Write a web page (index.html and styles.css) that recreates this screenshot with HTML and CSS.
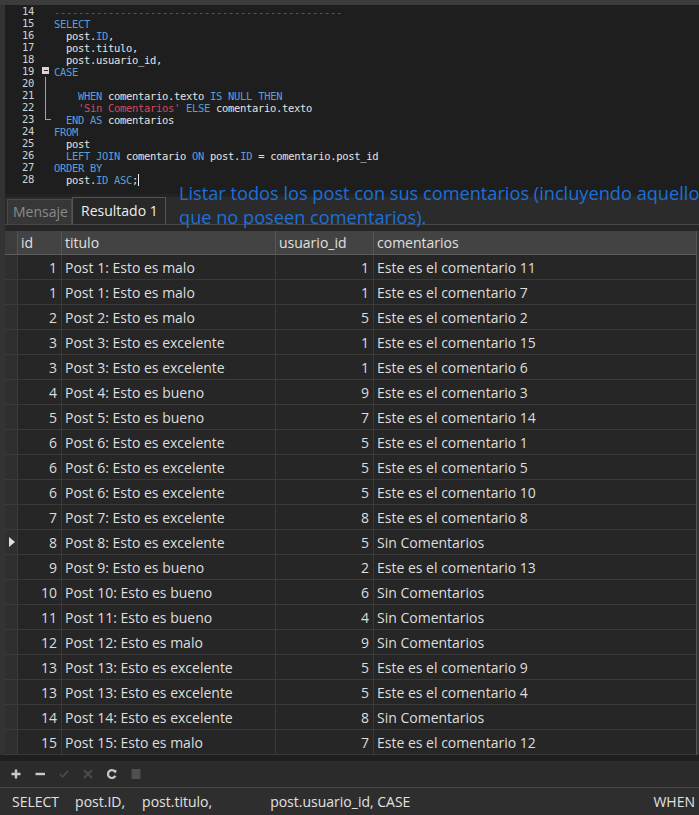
FILE: index.html
```html
<!DOCTYPE html>
<html lang="es">
<head>
<meta charset="utf-8">
<title>Consulta</title>
<link rel="stylesheet" href="styles.css">
</head>
<body>
<div class="app">
  <div class="topbar"></div>
  <div class="editor">
    <div class="gutter">
      <div>14</div><div>15</div><div>16</div><div>17</div><div>18</div><div>19</div><div>20</div><div>21</div><div>22</div><div>23</div><div>24</div><div>25</div><div>26</div><div>27</div><div>28</div>
    </div>
    <div class="folds">
      <div></div><div></div><div></div><div></div><div></div>
      <div class="f-box"><span></span></div>
      <div class="f-line"></div><div class="f-line"></div><div class="f-line"></div>
      <div class="f-end"></div>
    </div>
    <div class="code">
      <div class="ln cm">------------------------------------------------</div>
      <div class="ln"><span class="kw">SELECT</span></div>
      <div class="ln">  post.<span class="kw">ID</span>,</div>
      <div class="ln">  post.titulo,</div>
      <div class="ln">  post.usuario_id,</div>
      <div class="ln"><span class="kw">CASE</span></div>
      <div class="ln"> </div>
      <div class="ln">    <span class="kw">WHEN</span> comentario.texto <span class="kw">IS</span> <span class="kw">NULL</span> <span class="kw">THEN</span></div>
      <div class="ln">    <span class="str">'Sin Comentarios'</span> <span class="kw">ELSE</span> comentario.texto</div>
      <div class="ln">  <span class="kw">END</span> <span class="kw">AS</span> comentarios</div>
      <div class="ln"><span class="kw">FROM</span></div>
      <div class="ln">  post</div>
      <div class="ln">  <span class="kw">LEFT</span> <span class="kw">JOIN</span> comentario <span class="kw">ON</span> post.<span class="kw">ID</span> = comentario.post_id</div>
      <div class="ln"><span class="kw">ORDER</span> <span class="kw">BY</span></div>
      <div class="ln">  post.<span class="kw">ID</span> <span class="kw">ASC</span>;<span class="caret"></span></div>
    </div>
  </div>
  <div class="tabs">
    <div class="tab">Mensaje</div>
    <div class="tab active">Resultado 1</div>
  </div>
  <div class="tabs-under"></div>
  <div class="grid">
    <div class="row head"><div class="mark"></div><div>id</div><div>titulo</div><div>usuario_id</div><div>comentarios</div></div>
    <div class="row"><div class="mark"></div><div class="num">1</div><div>Post 1: Esto es malo</div><div class="num">1</div><div>Este es el comentario 11</div></div>
    <div class="row"><div class="mark"></div><div class="num">1</div><div>Post 1: Esto es malo</div><div class="num">1</div><div>Este es el comentario 7</div></div>
    <div class="row"><div class="mark"></div><div class="num">2</div><div>Post 2: Esto es malo</div><div class="num">5</div><div>Este es el comentario 2</div></div>
    <div class="row"><div class="mark"></div><div class="num">3</div><div>Post 3: Esto es excelente</div><div class="num">1</div><div>Este es el comentario 15</div></div>
    <div class="row"><div class="mark"></div><div class="num">3</div><div>Post 3: Esto es excelente</div><div class="num">1</div><div>Este es el comentario 6</div></div>
    <div class="row"><div class="mark"></div><div class="num">4</div><div>Post 4: Esto es bueno</div><div class="num">9</div><div>Este es el comentario 3</div></div>
    <div class="row"><div class="mark"></div><div class="num">5</div><div>Post 5: Esto es bueno</div><div class="num">7</div><div>Este es el comentario 14</div></div>
    <div class="row"><div class="mark"></div><div class="num">6</div><div>Post 6: Esto es excelente</div><div class="num">5</div><div>Este es el comentario 1</div></div>
    <div class="row"><div class="mark"></div><div class="num">6</div><div>Post 6: Esto es excelente</div><div class="num">5</div><div>Este es el comentario 5</div></div>
    <div class="row"><div class="mark"></div><div class="num">6</div><div>Post 6: Esto es excelente</div><div class="num">5</div><div>Este es el comentario 10</div></div>
    <div class="row"><div class="mark"></div><div class="num">7</div><div>Post 7: Esto es excelente</div><div class="num">8</div><div>Este es el comentario 8</div></div>
    <div class="row sel"><div class="mark"><span class="tri"></span></div><div class="num">8</div><div>Post 8: Esto es excelente</div><div class="num">5</div><div>Sin Comentarios</div></div>
    <div class="row"><div class="mark"></div><div class="num">9</div><div>Post 9: Esto es bueno</div><div class="num">2</div><div>Este es el comentario 13</div></div>
    <div class="row"><div class="mark"></div><div class="num">10</div><div>Post 10: Esto es bueno</div><div class="num">6</div><div>Sin Comentarios</div></div>
    <div class="row"><div class="mark"></div><div class="num">11</div><div>Post 11: Esto es bueno</div><div class="num">4</div><div>Sin Comentarios</div></div>
    <div class="row"><div class="mark"></div><div class="num">12</div><div>Post 12: Esto es malo</div><div class="num">9</div><div>Sin Comentarios</div></div>
    <div class="row"><div class="mark"></div><div class="num">13</div><div>Post 13: Esto es excelente</div><div class="num">5</div><div>Este es el comentario 9</div></div>
    <div class="row"><div class="mark"></div><div class="num">13</div><div>Post 13: Esto es excelente</div><div class="num">5</div><div>Este es el comentario 4</div></div>
    <div class="row"><div class="mark"></div><div class="num">14</div><div>Post 14: Esto es excelente</div><div class="num">8</div><div>Sin Comentarios</div></div>
    <div class="row"><div class="mark"></div><div class="num">15</div><div>Post 15: Esto es malo</div><div class="num">7</div><div>Este es el comentario 12</div></div>
  </div>
  <div class="sep"></div>
  <div class="toolbar">
    <svg class="ico" viewBox="0 0 10 10"><path d="M5 0.5v9M0.5 5h9" stroke="#c9c9c9" stroke-width="2.4" fill="none"/></svg>
    <svg class="ico" viewBox="0 0 10 10"><path d="M0.5 5h9.5" stroke="#c9c9c9" stroke-width="2.4" fill="none"/></svg>
    <svg class="ico" viewBox="0 0 12 10"><path d="M1 5.2l3.2 3.2L11 1.2" stroke="#4a4a4a" stroke-width="2" fill="none"/></svg>
    <svg class="ico" viewBox="0 0 10 10"><path d="M1 1l8 8M9 1l-8 8" stroke="#4a4a4a" stroke-width="2" fill="none"/></svg>
    <svg class="ico" viewBox="0 0 10 10"><path d="M8.3 3.2A3.9 3.9 0 1 0 8.4 6.8" stroke="#c9c9c9" stroke-width="2.2" fill="none"/><path d="M6.2 0.6L9.6 1.2 8.9 4.6z" fill="#c9c9c9"/></svg>
    <svg class="ico" viewBox="0 0 10 10"><rect x="0.5" y="0" width="9" height="10" fill="#4f4f4f"/></svg>
  </div>
  <div class="status">
    <span class="s1">SELECT</span>
    <span class="s2">post.ID,</span>
    <span class="s3">post.titulo,</span>
    <span class="s4">post.usuario_id, CASE</span>
    <span class="s5">WHEN</span>
  </div>
  <div class="note">Listar todos los post con sus comentarios (incluyendo aquellos<br>que no poseen comentarios).</div>
</div>
</body>
</html>
```

FILE: styles.css
```css
* { box-sizing: border-box; margin: 0; padding: 0; }
html, body { width: 699px; height: 815px; overflow: hidden; }
body { background: #2d2d2d; font-family: "Open Sans", "Liberation Sans", sans-serif; color: #dcdcdc; }

.app {
  position: relative;
  width: 699px;
  height: 815px;
  overflow: hidden;
  display: flex;
  flex-direction: column;
  background: #333333;
}

.topbar { height: 5px; flex: none; background: #3c3c3c; }

.editor {
  height: 189px;
  flex: none;
  margin-left: 5px;
  background: #1e1e1e;
  display: flex;
  font-family: "DejaVu Sans Mono", "Liberation Mono", monospace;
  font-size: 10.5px;
  letter-spacing: -0.32px;
  line-height: 12px;
}
.gutter { width: 29px; text-align: right; color: #d2d2d2; }
.folds { width: 20px; }
.folds > div { height: 12px; }
.f-box { display: flex; }
.f-box span {
  width: 7px; height: 7px;
  margin: 2px 0 0 8px;
  background: linear-gradient(#2a2a2a, #2a2a2a) center / 4px 1px no-repeat, #d6d6d6;
}
.folds .f-line { margin-left: 11px; border-left: 1px solid #a0a0a0; }
.folds .f-end { margin-left: 11px; width: 6px; height: 7px; border-left: 1px solid #a0a0a0; border-bottom: 1px solid #a0a0a0; }
.code { color: #e4e4e4; padding-top: 1px; }
.ln { height: 12px; white-space: pre; }
.cm { color: #5e5e5e; }
.kw { color: #5a9fd4; }
.str { color: #d6485f; }
.caret { display: inline-block; width: 1px; height: 12px; vertical-align: top; background: #f0f0f0; }

.tabs {
  height: 30px;
  flex: none;
  margin-left: 5px;
  padding-left: 2px;
  display: flex;
  align-items: flex-end;
  background: #2b2b2b;
  border-top: 3px solid #232323;
}
.tab {
  height: 25px;
  border: 1px solid #4a4a4a;
  border-bottom: none;
  font-size: 14px;
  line-height: 23px;
  white-space: nowrap;
}
.tab:first-child { width: 65px; padding-left: 5px; background: #373737; color: #8a8a8a; }
.tab.active { width: 94px; height: 27px; padding-left: 8px; background: #282828; color: #ededed; border-color: #545454; line-height: 26px; }
.tabs-under { height: 7px; flex: none; margin-left: 5px; background: #262626; border-top: 1px solid #474747; }

.grid {
  width: 692px;
  height: 524px;
  flex: none;
  margin-left: 5px;
  background: #262626;
  border-right: 1px solid #565656;
  font-size: 14px;
}
.row {
  display: grid;
  grid-template-columns: 13px 44px 214px 98px 1fr;
  height: 25px;
}
.row > div {
  border-right: 1px solid #3a3a3a;
  border-bottom: 1px solid #3a3a3a;
  padding: 0 4px 0 3px;
  line-height: 25px;
  white-space: nowrap;
  overflow: hidden;
  color: #dedede;
}
.row > div:last-child { border-right: none; }
.row .mark { background: #2f2f2f; padding: 0; display: flex; align-items: center; }
.row .num { text-align: right; }
.head { height: 24px; background: #434343; }
.head > div { border-right-color: #575757; border-bottom-color: #5c5c5c; line-height: 24px; color: #e0e0e0; }
.head .mark { background: #3c3c3c; }
.tri {
  width: 0; height: 0;
  margin-left: 4px;
  border-left: 6px solid #e0e0e0;
  border-top: 5px solid transparent;
  border-bottom: 5px solid transparent;
}

.sep { height: 6px; flex: none; background: #1f1f1f; }

.toolbar {
  height: 26px;
  flex: none;
  display: flex;
  align-items: center;
  gap: 14px;
  padding-left: 11px;
  background: #2b2b2b;
}
.ico { width: 10px; height: 10px; display: block; }

.status {
  height: 28px;
  flex: none;
  display: flex;
  align-items: center;
  padding: 0 4px 0 12px;
  background: #2e2e2e;
  border-top: 1px solid #474747;
  font-size: 14px;
  color: #e2e2e2;
  white-space: nowrap;
}
.s2 { margin-left: 16px; }
.s3 { margin-left: 17px; }
.s4 { margin-left: 58px; }
.s5 { margin-left: auto; }

.note {
  position: absolute;
  left: 179px;
  top: 181px;
  font-size: 18.2px;
  line-height: 24px;
  color: #1c70d8;
  white-space: nowrap;
}
```
